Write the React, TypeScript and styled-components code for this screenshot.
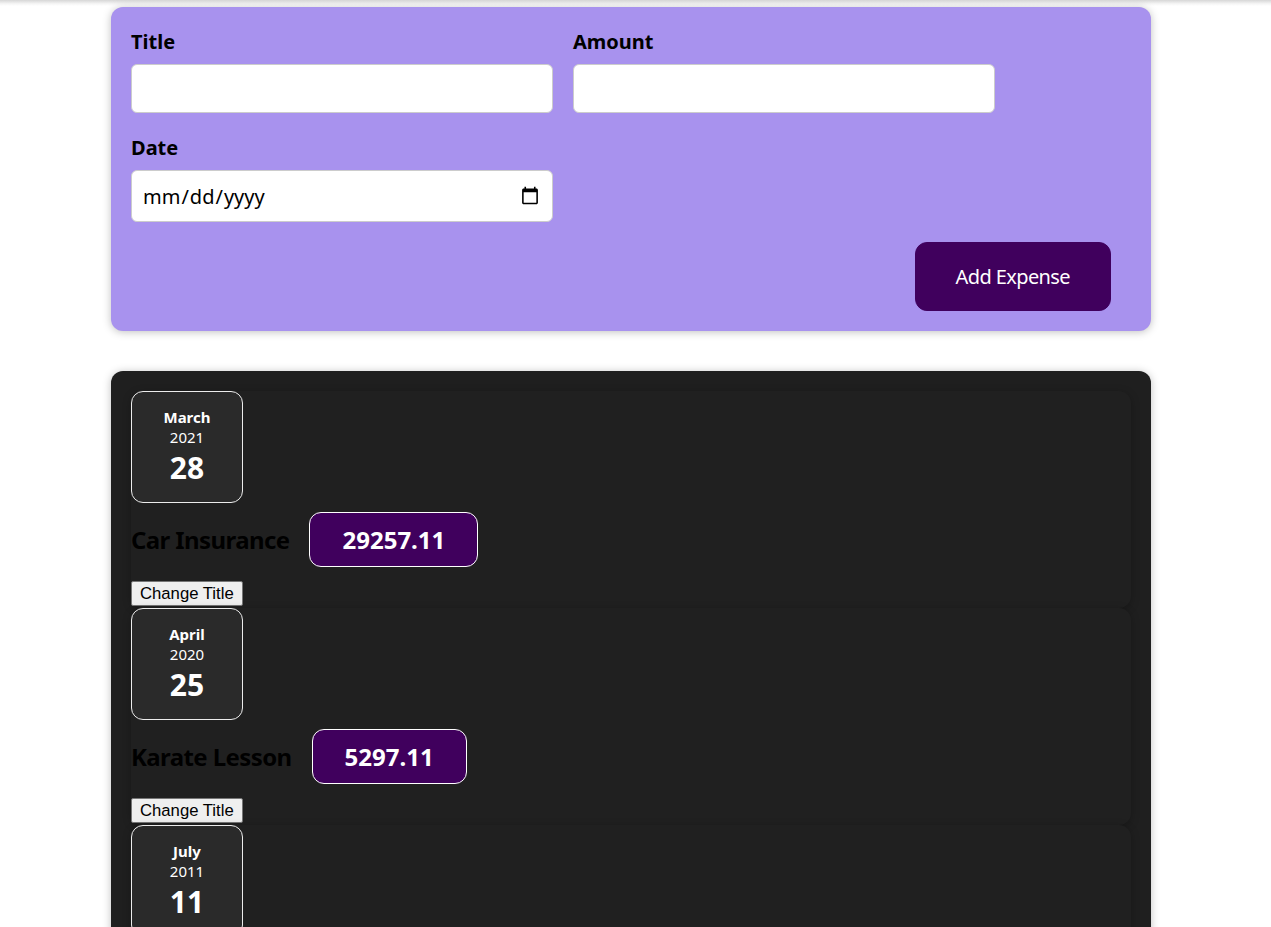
import React, { useState } from "react";
import styled, { createGlobalStyle } from "styled-components";

const GlobalStyle = createGlobalStyle`
  * { box-sizing: content-box; }
  html, body { margin: 0; padding: 0; background: #ffffff; }
  body { font-family: "Noto Sans", "Open Sans", sans-serif; font-size: 20px; color: #000; }
`;

const TopShade = styled.div`
  height: 6px;
  background: linear-gradient(#d6d6d6, #f4f4f4 60%, #ffffff);
`;

const Card = styled.div<{ $bg: string }>`
  width: 1000px;
  padding: 20px;
  margin: 1px 0 40px 111px;
  border-radius: 12px;
  background: ${(p) => p.$bg};
  box-shadow: 0 1px 8px rgba(0, 0, 0, 0.25);
`;

const ExpensesCard = styled(Card)`
  margin-top: 0;
`;

const Controls = styled.div`
  display: flex;
  flex-wrap: wrap;
  gap: 20px;
  margin-bottom: 20px;
  text-align: left;
`;

const Control = styled.div``;

const Label = styled.label`
  display: block;
  font-weight: bold;
  padding-top: 1px;
  margin-bottom: 9px;
  line-height: 27px;
`;

const Input = styled.input`
  font: inherit;
  padding: 10px;
  border-radius: 6px;
  border: 1px solid #ccc;
  width: 400px;
  background: #fff;
  outline: none;
  height: 27px;
  line-height: 27px;
`;

const DateInput = styled(Input)`
  height: 30px;
`;

const Actions = styled.div`
  text-align: right;
`;

const PrimaryButton = styled.button`
  font: inherit;
  cursor: pointer;
  padding: 20px 40px;
  border: 1px solid #40005d;
  background-color: #40005d;
  color: white;
  border-radius: 12px;
  margin-right: 20px;
  line-height: 27px;
  letter-spacing: -0.6px;
`;

const Item = styled.div`
  border-radius: 12px;
  background: #202020;
  box-shadow: 0 2px 8px rgba(0, 0, 0, 0.25);
  padding-bottom: 2px;
`;

const DateBox = styled.div`
  display: flex;
  flex-direction: column;
  align-items: center;
  justify-content: center;
  width: 110px;
  height: 110px;
  border: 1px solid #ececec;
  background-color: #2a2a2a;
  color: white;
  border-radius: 12px;
`;

const DatePart = styled.div<{ $size: number; $bold?: boolean }>`
  font-size: ${(p) => p.$size}px;
  font-weight: ${(p) => (p.$bold ? "bold" : "normal")};
  line-height: ${(p) => Math.round(p.$size * 1.36)}px;
`;

const Description = styled.div`
  display: flex;
  align-items: center;
  gap: 20px;
`;

const ItemTitle = styled.h2`
  font-size: 24px;
  font-weight: bold;
  margin: 20px 0;
  padding-top: 1px;
  line-height: 32px;
  color: #000;
  letter-spacing: -0.6px;
`;

const Price = styled.div`
  font-size: 24px;
  font-weight: bold;
  line-height: 33px;
  color: white;
  background-color: #40005d;
  border: 1px solid white;
  padding: 10px 32px;
  border-radius: 12px;
`;

const ChangeButton = styled.button`
  display: block;
  margin-top: 5px;
  font-family: "Liberation Sans", Arial, sans-serif;
  font-size: 16.7px;
  line-height: 21px;
  padding: 1px 8px;
  color: #000;
  background: #efefef;
  border: 1px solid #767676;
  border-radius: 2px;
`;

type Expense = { id: string; title: string; amount: string; date: Date };

const initial: Expense[] = [
  { id: "e1", title: "Car Insurance", amount: "29257.11", date: new Date(2021, 2, 28) },
  { id: "e2", title: "Karate Lesson", amount: "5297.11", date: new Date(2020, 3, 25) },
  { id: "e3", title: "New Desk (Wooden)", amount: "450.00", date: new Date(2011, 6, 11) },
];

function ExpenseItem({ e }: { e: Expense }) {
  const [title, setTitle] = useState(e.title);
  const month = e.date.toLocaleString("en-US", { month: "long" });
  return (
    <Item>
      <DateBox>
        <DatePart $size={15} $bold>{month}</DatePart>
        <DatePart $size={15}>{e.date.getFullYear()}</DatePart>
        <DatePart $size={30} $bold>{e.date.getDate()}</DatePart>
      </DateBox>
      <Description>
        <ItemTitle>{title}</ItemTitle>
        <Price>{e.amount}</Price>
      </Description>
      <ChangeButton onClick={() => setTitle("Updated!")}>Change Title</ChangeButton>
    </Item>
  );
}

export default function App() {
  return (
    <>
      <GlobalStyle />
      <TopShade />
      <Card $bg="#a892ee">
        <form onSubmit={(ev) => ev.preventDefault()}>
          <Controls>
            <Control>
              <Label>Title</Label>
              <Input type="text" />
            </Control>
            <Control>
              <Label>Amount</Label>
              <Input type="number" />
            </Control>
            <Control>
              <Label>Date</Label>
              <DateInput type="date" />
            </Control>
          </Controls>
          <Actions>
            <PrimaryButton type="submit">Add Expense</PrimaryButton>
          </Actions>
        </form>
      </Card>
      <ExpensesCard $bg="#1f1f1f">
        {initial.map((e) => (
          <ExpenseItem key={e.id} e={e} />
        ))}
      </ExpensesCard>
    </>
  );
}
